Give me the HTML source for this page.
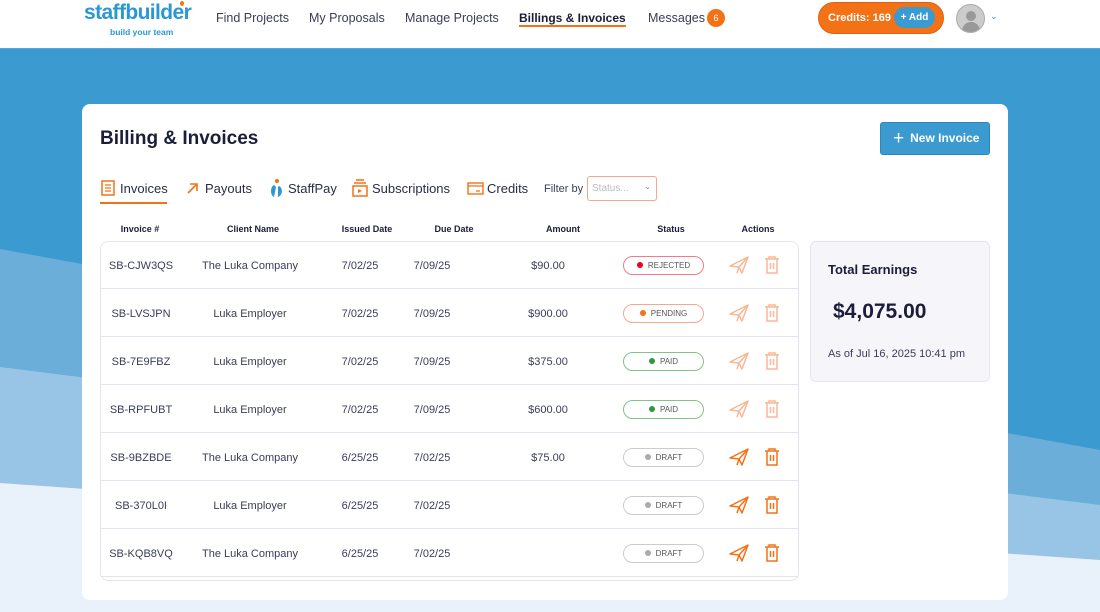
<!DOCTYPE html>
<html><head><meta charset="utf-8"><style>
*{margin:0;padding:0;box-sizing:border-box}
body{width:1100px;height:612px;overflow:hidden;font-family:"Liberation Sans",sans-serif;position:relative;background:#e9f1fa;color:#1b1d3a}
.abs{position:absolute}
.hdr{position:absolute;left:0;top:0;width:1100px;height:49px;background:#fff;border-bottom:1px solid #5aa2d4}
.nav{position:absolute;top:11px;font-size:12.5px;color:#3a3d55}
.card{position:absolute;left:82px;top:104px;width:926px;height:496px;background:#fff;border-radius:8px}
.th{position:absolute;top:224px;font-size:9px;font-weight:bold;color:#1b1d3a;transform:translateX(-50%)}
.tbl{position:absolute;left:100px;top:241px;width:699px;height:340px;border:1px solid #e4e4ee;border-radius:8px}
.row{position:absolute;left:101px;width:697px;height:48px;border-bottom:1px solid #e4e4ee}
.c{position:absolute;top:19px;font-size:11px;color:#3a3d55;transform:translateX(-50%);white-space:nowrap}
.bd{position:absolute;left:522px;top:15px;width:81px;height:19px;border-radius:10px;border:1px solid;font-size:8px;color:#555;text-align:center;line-height:17px}
.bd i{display:inline-block;width:6px;height:6px;border-radius:50%;margin-right:5px;vertical-align:0}
.ic{position:absolute;top:14px}
.tab{position:absolute;top:181px;font-size:13px;color:#2b2d45}
</style></head><body>
<svg class="abs" style="left:0;top:49px" width="1100" height="563">
<rect width="1100" height="563" fill="#e9f1fa"/>
<polygon points="0,0 1100,0 1100,511 0,434" fill="#98c5e6"/>
<polygon points="0,0 1100,0 1100,456 0,318" fill="#6aaed9"/>
<polygon points="0,0 1100,0 1100,401 0,200" fill="#3b9bd1"/>
</svg>
<div class="hdr">
<div class="abs" style="left:84px;top:1px;font-size:21px;font-weight:bold;color:#2b97d4;letter-spacing:-0.6px">staffbuilder</div>
<div class="abs" style="left:110px;top:27px;font-size:8.5px;color:#2b97d4;font-weight:bold">build your team</div>
<div class="abs" style="left:180px;top:1px;width:4px;height:5px;border-radius:50%;background:#f47216"></div>
<div class="nav" style="left:216px">Find Projects</div>
<div class="nav" style="left:309px">My Proposals</div>
<div class="nav" style="left:405px">Manage Projects</div>
<div class="nav" style="left:519px;font-weight:bold;color:#1b1d3a;font-size:12px">Billings &amp; Invoices</div>
<div class="abs" style="left:519px;top:25px;width:107px;height:2px;background:#f47216"></div>
<div class="nav" style="left:648px">Messages</div>
<div class="abs" style="left:707px;top:9px;width:18px;height:18px;border-radius:50%;background:#f47216;color:#fff;font-size:9px;text-align:center;line-height:18px">6</div>
<div class="abs" style="left:818px;top:2px;width:126px;height:32px;border-radius:16px;background:#f47216;border:1px solid #e06010"></div>
<div class="abs" style="left:828px;top:12px;font-size:11px;font-weight:bold;color:#fff">Credits: 169</div>
<div class="abs" style="left:894px;top:7px;width:41px;height:21px;border-radius:11px;background:#3b9bd1;color:#fff;font-size:10px;font-weight:bold;text-align:center;line-height:21px">+ Add</div>
<div class="abs" style="left:956px;top:4px;width:29px;height:29px;border-radius:50%;background:#ccc;border:1px solid #aaa;overflow:hidden">
<div class="abs" style="left:9px;top:6px;width:10px;height:10px;border-radius:50%;background:#999"></div>
<div class="abs" style="left:5px;top:17px;width:18px;height:14px;border-radius:9px 9px 0 0;background:#999"></div></div>
<div class="abs" style="left:990px;top:11px;font-size:9px;color:#3b9bd1">&#8964;</div>
</div>
<div class="card"></div>
<div class="abs" style="left:100px;top:128px;font-size:19px;font-weight:bold;color:#1b1d3a">Billing &amp; Invoices</div>
<div class="abs" style="left:880px;top:122px;width:110px;height:33px;background:#3b9bd1;border:1px solid #2f86b8;border-radius:3px;color:#fff;font-size:12px;font-weight:bold;line-height:31px;padding-left:12px"><span style="font-size:19px;font-weight:normal;vertical-align:-2px;margin-right:6px">+</span>New Invoice</div>
<svg class="abs" style="left:101px;top:180px" width="14" height="16"><rect x="1" y="1" width="12" height="14" fill="none" stroke="#f47216" stroke-width="1.5"/><path d="M4 5h6M4 8h6M4 11h6" stroke="#f47216" stroke-width="1.3"/></svg>
<div class="tab" style="left:120px">Invoices</div>
<div class="abs" style="left:100px;top:202px;width:67px;height:2px;background:#f47216"></div>
<svg class="abs" style="left:186px;top:182px" width="13" height="13"><path d="M2 11L11 2M4 2h7v7" fill="none" stroke="#f47216" stroke-width="1.6"/></svg>
<div class="tab" style="left:205px">Payouts</div>
<svg class="abs" style="left:268px;top:178px" width="16" height="20"><circle cx="9" cy="3" r="2" fill="#f47216"/><path d="M6 7C2 9 2 17 6 19L8 9z" fill="#2b97d4"/><path d="M11 8C15 10 15 17 10 19L10 9z" fill="#2b97d4"/></svg>
<div class="tab" style="left:288px">StaffPay</div>
<svg class="abs" style="left:352px;top:179px" width="16" height="18"><path d="M4 1h8M2 4h12" stroke="#f47216" stroke-width="1.4"/><rect x="1" y="7" width="14" height="10" fill="none" stroke="#f47216" stroke-width="1.5"/><path d="M6 10l4 2-4 2z" fill="#f47216"/></svg>
<div class="tab" style="left:372px">Subscriptions</div>
<svg class="abs" style="left:467px;top:182px" width="17" height="13"><rect x="1" y="1" width="15" height="11" fill="none" stroke="#f47216" stroke-width="1.4"/><path d="M1 4h15M9 9h4" stroke="#f47216" stroke-width="1.2"/></svg>
<div class="tab" style="left:487px">Credits</div>
<div class="abs" style="left:544px;top:183px;font-size:11px;color:#3a3d55">Filter by</div>
<div class="abs" style="left:587px;top:176px;width:70px;height:25px;border:1px solid #f4a98a;border-radius:3px;font-size:10px;color:#bbb;padding:6px 0 0 4px">Status...<span style="position:absolute;right:5px;top:5px;font-size:8px;color:#888">&#8964;</span></div>
<div class="th" style="left:140px">Invoice #</div>
<div class="th" style="left:253px">Client Name</div>
<div class="th" style="left:367px">Issued Date</div>
<div class="th" style="left:454px">Due Date</div>
<div class="th" style="left:563px">Amount</div>
<div class="th" style="left:671px">Status</div>
<div class="th" style="left:758px">Actions</div>
<div class="tbl"></div>
<div id="rows"></div>
<div class="abs" style="left:810px;top:241px;width:180px;height:141px;background:#f6f5fa;border:1px solid #e6e4ee;border-radius:6px"></div>
<div class="abs" style="left:828px;top:262px;font-size:13px;font-weight:bold">Total Earnings</div>
<div class="abs" style="left:833px;top:300px;font-size:21px;font-weight:bold">$4,075.00</div>
<div class="abs" style="left:828px;top:348px;font-size:11px;color:#3a3d55">As of Jul 16, 2025 10:41 pm</div>
<script>
var d=[["SB-CJW3QS","The Luka Company","7/02/25","7/09/25","$90.00","REJECTED","#e8001c","#f07b8a",1],
["SB-LVSJPN","Luka Employer","7/02/25","7/09/25","$900.00","PENDING","#f47216","#f4a98a",1],
["SB-7E9FBZ","Luka Employer","7/02/25","7/09/25","$375.00","PAID","#2e9a3e","#7fc48a",1],
["SB-RPFUBT","Luka Employer","7/02/25","7/09/25","$600.00","PAID","#2e9a3e","#7fc48a",1],
["SB-9BZBDE","The Luka Company","6/25/25","7/02/25","$75.00","DRAFT","#aaa","#ccc",0],
["SB-370L0I","Luka Employer","6/25/25","7/02/25","","DRAFT","#aaa","#ccc",0],
["SB-KQB8VQ","The Luka Company","6/25/25","7/02/25","","DRAFT","#aaa","#ccc",0]];
var h="";d.forEach(function(r,i){var top=241+i*48;var col=r[8]?"#f8b795":"#f47216";
h+='<div class="row" style="top:'+top+'px">'+
'<div class="c" style="left:40px">'+r[0]+'</div><div class="c" style="left:149px">'+r[1]+'</div><div class="c" style="left:259px">'+r[2]+'</div><div class="c" style="left:331px">'+r[3]+'</div><div class="c" style="left:447px">'+r[4]+'</div>'+
'<div class="bd" style="border-color:'+r[7]+'"><i style="background:'+r[6]+'"></i>'+r[5]+'</div>'+
'<svg class="ic" style="left:628px" width="20" height="20"><path d="M1 11L19 2L13 18L10 12z M10 12L19 2 M10 12L8 18" fill="none" stroke="'+col+'" stroke-width="1.5" stroke-linejoin="round"/></svg>'+
'<svg class="ic" style="left:663px" width="16" height="20"><path d="M1 4h14M5 4V2h6v2M3 4v14h10V4M6.5 8v6M9.5 8v6" fill="none" stroke="'+col+'" stroke-width="1.5"/></svg></div>';});
document.getElementById("rows").innerHTML=h;
</script>
</body></html>
